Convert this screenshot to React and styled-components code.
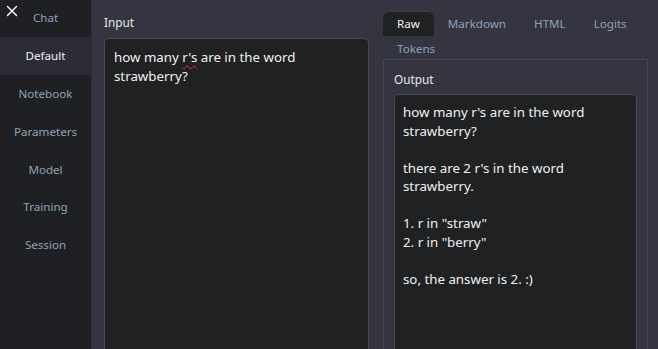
import React from 'react'
import styled, { createGlobalStyle } from 'styled-components'

const GlobalStyle = createGlobalStyle`
  html, body {
    margin: 0;
    padding: 0;
    background: #343541;
    overflow: hidden;
  }
  body {
    font-family: 'Noto Sans', 'Open Sans', sans-serif;
  }
`

const Page = styled.div`
  display: flex;
  height: 349px;
  width: 658px;
  background: #343541;
  overflow: hidden;
`

const Sidebar = styled.nav`
  position: relative;
  width: 91px;
  flex-shrink: 0;
  background: #1f2023;
  border-right: 1px solid #2c2d35;
  display: flex;
  flex-direction: column;
`

const NavList = styled.div`
  margin-top: -1px;
  display: flex;
  flex-direction: column;
`

const CloseButton = styled.button`
  position: absolute;
  top: 4px;
  left: 5px;
  width: 14px;
  height: 14px;
  padding: 0;
  border: none;
  background: none;
  color: #f2f2f2;
  display: flex;
  align-items: center;
  justify-content: center;
  z-index: 1;
`

const NavItem = styled.div`
  height: 37.8px;
  display: flex;
  align-items: center;
  justify-content: center;
  font-size: 11.6px;
  color: ${p => (p.$active ? '#f4f4f4' : '#8fa2ba')};
  background: ${p => (p.$active ? '#2b2c36' : 'transparent')};
`

const Main = styled.main`
  flex: 1;
  display: flex;
  gap: 14px;
  padding: 11px 10px 0 12px;
  min-width: 0;
`

const Column = styled.section`
  flex: 1;
  min-width: 0;
  display: flex;
  flex-direction: column;
`

const Label = styled.div`
  font-size: 11.8px;
  color: #e6e6e6;
  line-height: 20px;
  margin: ${p => p.$margin || '0'};
`

const TextBox = styled.div`
  flex: 1;
  background: #202123;
  border: 1px solid #4a4b52;
  border-bottom: none;
  border-radius: 5px 5px 0 0;
  padding: ${p => p.$pad || '9px 9px'};
  color: #f0f0f0;
  font-size: 13.3px;
  line-height: 18.5px;
  white-space: pre-wrap;
`

const Misspelled = styled.span`
  text-decoration: underline wavy #e0302c;
  text-decoration-thickness: 1px;
  text-underline-offset: 3px;
`

const Tabs = styled.div`
  display: flex;
  flex-wrap: wrap;
`

const Tab = styled.div`
  height: 25px;
  padding: 0 14px;
  display: flex;
  align-items: center;
  font-size: 11.6px;
  border-radius: 6px 6px 0 0;
  color: ${p => (p.$active ? '#f4f4f4' : '#8fa2ba')};
  background: ${p => (p.$active ? '#202123' : 'transparent')};
  box-shadow: ${p => (p.$active ? 'inset 0 1px 0 #3c3d45' : 'none')};
`

const Panel = styled.div`
  flex: 1;
  margin-top: -2px;
  border: 1px solid #45464f;
  border-bottom: none;
  padding: 10px 10px 0;
  display: flex;
  flex-direction: column;
`

const OUTPUT = `how many r's are in the word strawberry?

there are 2 r's in the word strawberry.

1. r in "straw"
2. r in "berry"

so, the answer is 2. :)`

const NAV = ['Chat', 'Default', 'Notebook', 'Parameters', 'Model', 'Training', 'Session']
const TABS = ['Raw', 'Markdown', 'HTML', 'Logits', 'Tokens']

const App = () => {
  return (
    <Page>
      <GlobalStyle />
      <Sidebar>
        <CloseButton aria-label="close">
          <svg width="12" height="12" viewBox="0 0 12 12">
            <path d="M1.5 1.5 L10.5 10.5 M10.5 1.5 L1.5 10.5" stroke="currentColor" strokeWidth="1.5" strokeLinecap="round" />
          </svg>
        </CloseButton>
        <NavList>
          {NAV.map(n => (
            <NavItem key={n} $active={n === 'Default'}>{n}</NavItem>
          ))}
        </NavList>
      </Sidebar>
      <Main>
        <Column>
          <Label $margin="1px 0 6px">Input</Label>
          <TextBox $pad="9px 9px">
            how many <Misspelled>r's</Misspelled> are in the word strawberry?
          </TextBox>
        </Column>
        <Column>
          <Tabs>
            {TABS.map(t => (
              <Tab key={t} $active={t === 'Raw'}>{t}</Tab>
            ))}
          </Tabs>
          <Panel>
            <Label $margin="-1px 0 5px">Output</Label>
            <TextBox $pad="8px 8px">{OUTPUT}</TextBox>
          </Panel>
        </Column>
      </Main>
    </Page>
  )
}

export default App
